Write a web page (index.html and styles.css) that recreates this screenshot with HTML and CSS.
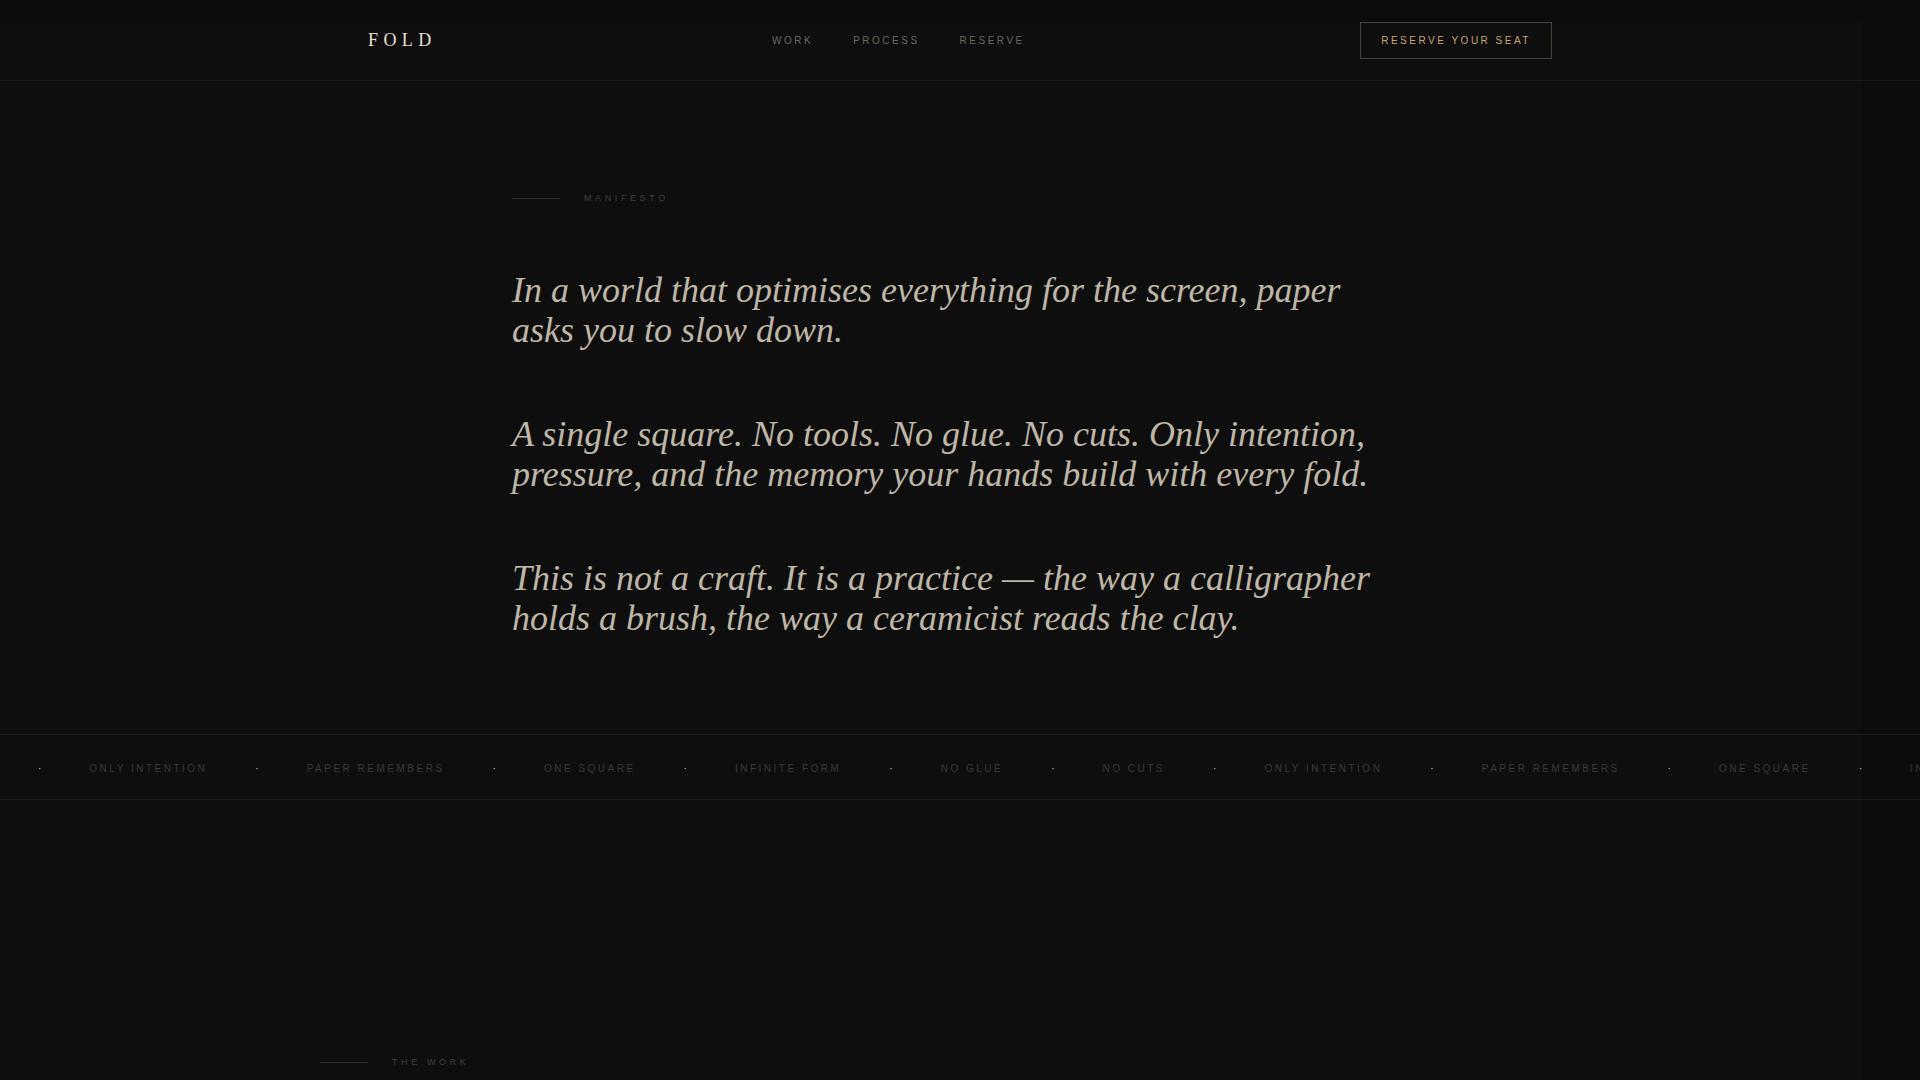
FILE: index.html
```
<!DOCTYPE html>
<html lang="en">
<head>
  <meta charset="UTF-8">
  <title>FOLD</title>
  <link rel="stylesheet" href="styles.css">
</head>
<body>

<header class="nav">
  <div class="nav-inner">
    <a class="logo" href="#">FOLD</a>
    <nav class="nav-links">
      <a href="#work">Work</a>
      <a href="#process">Process</a>
      <a href="#reserve">Reserve</a>
    </nav>
    <a class="nav-cta" href="#reserve">Reserve your seat</a>
  </div>
</header>

<main>
  <section class="manifesto">
    <h2 class="label">Manifesto</h2>
    <div class="manifesto-text">
      <p>In a world that optimises everything for the screen, paper asks you to slow down.</p>
      <p>A single square. No tools. No glue. No cuts. Only intention, pressure, and the memory your hands build with every fold.</p>
      <p>This is not a craft. It is a practice — the way a calligrapher holds a brush, the way a ceramicist reads the clay.</p>
    </div>
  </section>

  <div class="marquee">
    <div class="marquee-track">
      <i class="dot">·</i><span>Only intention</span>
      <i class="dot">·</i><span>Paper remembers</span>
      <i class="dot">·</i><span>One square</span>
      <i class="dot">·</i><span>Infinite form</span>
      <i class="dot">·</i><span>No glue</span>
      <i class="dot">·</i><span>No cuts</span>
      <i class="dot">·</i><span>Only intention</span>
      <i class="dot">·</i><span>Paper remembers</span>
      <i class="dot">·</i><span>One square</span>
      <i class="dot">·</i><span>Infinite form</span>
    </div>
  </div>

  <section class="work" id="work">
    <h2 class="label">The work</h2>
  </section>
</main>

<div class="grain"></div>

</body>
</html>
```
FILE: styles.css
```
* {
  box-sizing: border-box;
  margin: 0;
  padding: 0;
}
html {
  height: 100%;
  overflow: hidden;
}
body {
  height: 100%;
  overflow: hidden;
  background: #0c0c0c;
  color: #beb6a5;
  font-family: "Liberation Sans", Arial, sans-serif;
}
a {
  color: inherit;
  text-decoration: none;
}

/* nav */
.nav {
  border-bottom: 1px solid #1a1a1a;
}
.nav-inner {
  display: flex;
  align-items: center;
  justify-content: space-between;
  max-width: 1280px;
  height: 80px;
  margin: 0 auto;
  padding: 0 48px;
}
.logo {
  font-family: "Liberation Serif", "Times New Roman", serif;
  font-size: 18px;
  letter-spacing: 0.3em;
  color: #e8e0d0;
}
.nav-links {
  display: flex;
  gap: 40px;
  font-size: 10px;
  letter-spacing: 0.25em;
  text-transform: uppercase;
  color: #6a665e;
}
.nav-cta {
  padding: 12px 20px;
  border: 1px solid #45402f;
  font-size: 10px;
  line-height: 11px;
  letter-spacing: 0.25em;
  text-transform: uppercase;
  color: #c4a574;
}

/* section label with a rule in front */
.label {
  display: flex;
  align-items: center;
  gap: 24px;
  font-size: 9px;
  font-weight: normal;
  line-height: 12px;
  letter-spacing: 0.4em;
  text-transform: uppercase;
  color: #3e3e3c;
}
.label::before {
  content: "";
  width: 48px;
  height: 1px;
  background: #2c2c2b;
}

/* manifesto */
.manifesto {
  max-width: 896px;
  margin: 0 auto;
  padding: 111px 0 96px;
}
.manifesto-text {
  display: flex;
  flex-direction: column;
  gap: 64px;
  margin-top: 66px;
  font-family: "Liberation Serif", "Times New Roman", serif;
  font-size: 36px;
  font-style: italic;
  line-height: 40px;
}

/* marquee */
.marquee {
  overflow: hidden;
  padding: 0 38px;
  border-top: 1px solid #191919;
  border-bottom: 1px solid #191919;
}
.marquee-track {
  display: flex;
  gap: 48px;
  width: max-content;
  padding: 28px 0 24px;
  font-size: 10px;
  line-height: 12px;
  letter-spacing: 0.25em;
  text-transform: uppercase;
  color: #383837;
}
.dot {
  font-style: normal;
  letter-spacing: 0;
  color: #d8d0c0;
}

/* work */
.work {
  max-width: 1280px;
  margin: 0 auto;
  padding-top: 256px;
}

/* lighter film over the page */
.grain {
  position: fixed;
  inset: 2% 3% 0 0;
  background: rgba(255, 255, 255, 0.01);
  pointer-events: none;
}
```
